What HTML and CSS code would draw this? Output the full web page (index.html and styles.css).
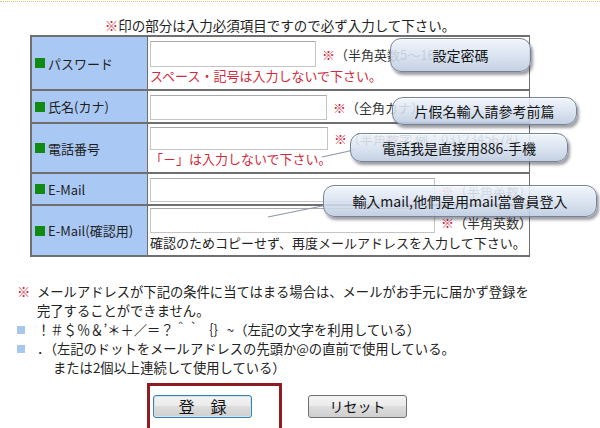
FILE: index.html
```html
<!DOCTYPE html>
<html lang="ja">
<head>
<meta charset="utf-8">
<title>登録</title>
<link rel="stylesheet" href="styles.css">
</head>
<body>
<div class="topline"></div>
<div class="wrap">
  <p class="title"><span class="req">※</span>印の部分は入力必須項目ですので必ず入力して下さい。</p>
  <div class="form">
    <div class="label"><span class="sq"></span>パスワード</div>
    <div class="field f1">
      <div class="line"><input type="password" class="in i1"><span class="note"><span class="req">※</span>（半角英数5～16桁）</span></div>
      <div class="warn">スペース・記号は入力しないで下さい。</div>
    </div>

    <div class="label"><span class="sq"></span>氏名(カナ)</div>
    <div class="field f2">
      <div class="line"><input type="text" class="in i2"><span class="note"><span class="req">※</span>（全角カナ）</span></div>
    </div>

    <div class="label"><span class="sq"></span>電話番号</div>
    <div class="field f3">
      <div class="line"><input type="text" class="in i3"><span class="note"><span class="req">※</span>（半角数字 例：0312345678）</span></div>
      <div class="warn">「－」は入力しないで下さい。</div>
    </div>

    <div class="label"><span class="sq"></span>E-Mail</div>
    <div class="field f4">
      <div class="line"><input type="text" class="in i4"><span class="note"><span class="req">※</span>（半角英数）</span></div>
    </div>

    <div class="label"><span class="sq"></span>E-Mail(確認用)</div>
    <div class="field f5">
      <div class="line"><input type="text" class="in i5"><span class="note"><span class="req">※</span>（半角英数）</span></div>
      <div class="hint">確認のためコピーせず、再度メールアドレスを入力して下さい。</div>
    </div>
  </div>
</div>

<div class="notes">
  <div class="nrow"><span class="mk req">※</span><div class="ntext">メールアドレスが下記の条件に当てはまる場合は、メールがお手元に届かず登録を<br>完了することができません。</div></div>
  <div class="nrow"><span class="mk"><i class="bsq"></i></span><div class="ntext">！＃＄％＆’＊＋／＝？＾｀｛｝~（左記の文字を利用している）</div></div>
  <div class="nrow"><span class="mk"><i class="bsq"></i></span><div class="ntext">．（左記のドットをメールアドレスの先頭か@の直前で使用している。<div class="ind">または2個以上連続して使用している）</div></div></div>
</div>

<div class="buttons">
  <button type="submit" class="btn btn-main">登　録</button>
  <button type="reset" class="btn">リセット</button>
</div>

<div class="redbox"></div>

<svg class="tails" width="600" height="428" viewBox="0 0 600 428" aria-hidden="true">
  <line x1="322" y1="157" x2="354" y2="150" stroke="#8c96a8" stroke-width="1.2"/>
  <line x1="268" y1="217" x2="327" y2="205" stroke="#8c96a8" stroke-width="1.2"/>
</svg>

<div class="bubble b1">設定密碼</div>
<div class="bubble b2">片假名輸入請參考前篇</div>
<div class="bubble b3">電話我是直接用886-手機</div>
<div class="bubble b4">輸入mail,他們是用mail當會員登入</div>
</body>
</html>
```

FILE: styles.css
```css
* { box-sizing: border-box; }
html, body { margin: 0; padding: 0; }
body {
  width: 600px;
  height: 428px;
  overflow: hidden;
  position: relative;
  background: #fff;
  color: #222;
  font-family: "Noto Sans CJK JP", "Noto Sans", sans-serif;
  font-size: 13px;
}
.topline {
  margin-top: 1px;
  border-top: 1px dotted #d6cb7c;
}
.wrap {
  width: 500px;
  margin-left: 30px;
}
.title {
  margin: 0;
  padding-top: 14px;
  height: 33px;
  line-height: 19px;
  font-size: 13.5px;
  text-align: center;
  white-space: nowrap;
}
.req { color: #d8263a; }

.form {
  display: grid;
  grid-template-columns: 115px 381px;
  grid-template-rows: 52px 31px 48px 30px 49px;
  column-gap: 1px;
  row-gap: 2px;
  padding: 2px 1px 2px 2px;
  background: #6f6f6f;
}
.label {
  background: #aac8f4;
  display: flex;
  align-items: center;
  padding-left: 3px;
  white-space: nowrap;
  font-size: 13px;
  color: #1e1e1e;
}
.sq {
  width: 10px;
  height: 10px;
  background: #118a11;
  margin-right: 3px;
  flex: none;
}
.field {
  background: #fff;
  padding-left: 2px;
}
.f1 { padding-top: 4px; }
.f2 { padding-top: 4px; }
.f3 { padding-top: 3px; }
.f4 { padding-top: 4px; }
.f5 { padding-top: 2px; }

.line {
  display: flex;
  align-items: center;
  white-space: nowrap;
}
.in {
  display: block;
  margin: 0 6px 0 0;
  padding: 0;
  border: 1px solid #c4c4c4;
  border-top-color: #a9a9a9;
  background: #fff;
  flex: none;
}
.i1 { width: 166px; height: 26px; }
.i2 { width: 177px; height: 25px; }
.i3 { width: 178px; height: 23px; }
.i4 { width: 285px; height: 24px; }
.i5 { width: 285px; height: 25px; }
.f5 .line { align-items: flex-end; }
.f5 .note { margin-bottom: 1px; }

.note { color: #333; font-size: 13px; }
.warn {
  color: #d22a3c;
  line-height: 18px;
  font-size: 13px;
  white-space: nowrap;
}
.hint {
  line-height: 19px;
  font-size: 13px;
  white-space: nowrap;
  color: #222;
}

.notes {
  margin: 25px 0 0 17px;
  font-size: 13.3px;
  line-height: 19px;
}
.nrow {
  display: flex;
}
.mk {
  width: 20px;
  flex: none;
  display: flex;
  align-items: flex-start;
}
.bsq {
  display: block;
  width: 8px;
  height: 8px;
  margin-top: 6px;
  background: #a9c6ee;
}
.ntext { white-space: nowrap; }
.ind { padding-left: 16px; }

.buttons {
  display: flex;
  gap: 56px;
  margin: 18px 0 0 153px;
}
.btn {
  width: 99px;
  height: 23px;
  margin: 0;
  padding: 0;
  border: 1px solid #707070;
  border-radius: 3px;
  background: linear-gradient(#f3f3f3 0%, #ebebeb 48%, #dddddd 50%, #cfcfcf 100%);
  font-family: "Noto Sans CJK JP", sans-serif;
  font-size: 14px;
  color: #111;
  line-height: 21px;
}
.btn-main {
  border-color: #3c7fb1;
  box-shadow: inset 0 0 0 1px #c8e4f6;
  font-size: 16px;
}

.redbox {
  position: absolute;
  left: 147px;
  top: 383px;
  width: 135px;
  height: 60px;
  border: 3px solid #8d1d22;
}

.tails {
  position: absolute;
  left: 0;
  top: 0;
  pointer-events: none;
}

.bubble {
  position: absolute;
  display: flex;
  align-items: center;
  justify-content: center;
  border: 1px solid #74839c;
  border-radius: 11px;
  background: linear-gradient(rgba(240,244,250,0.88) 0%, rgba(215,225,239,0.88) 50%, rgba(190,204,224,0.9) 100%);
  box-shadow: 2px 3px 3px rgba(40,40,50,0.45), inset 0 1px 0 rgba(255,255,255,0.8);
  font-family: "Noto Sans CJK TC", "Noto Sans CJK JP", sans-serif;
  font-size: 14px;
  color: #141414;
  white-space: nowrap;
}
.b1 { left: 390px; top: 38px; width: 141px; height: 34px; }
.b2 { left: 392px; top: 97px; width: 185px; height: 28px; }
.b3 { left: 350px; top: 133px; width: 218px; height: 29px; }
.b4 { left: 323px; top: 185px; width: 274px; height: 32px; }
```
